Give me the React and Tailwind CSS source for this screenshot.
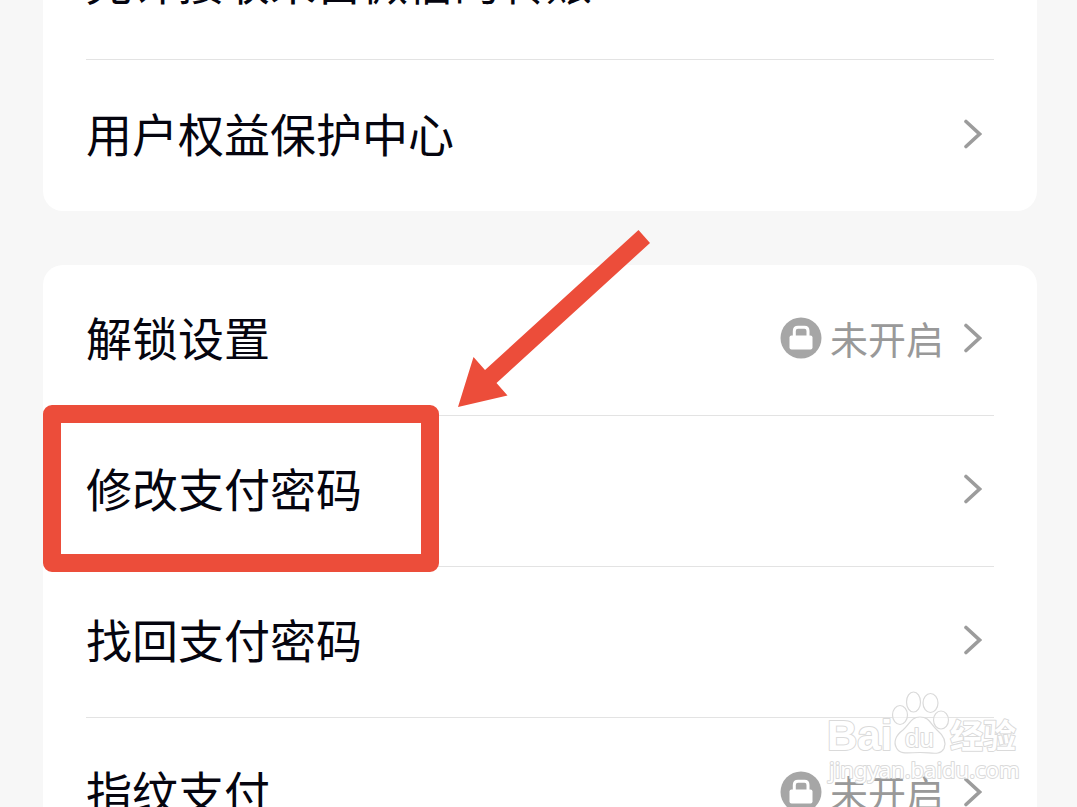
import React from "react";

const FONT =
  "font-['Noto_Sans_CJK_SC','Noto_Sans',sans-serif]";

function Chevron() {
  return (
    <svg viewBox="0 0 18 30" className="-mt-1 h-[30px] w-[18px] shrink-0" fill="none" aria-hidden="true">
      <path d="M2 2.500 L15.500 15 L2 27.500" stroke="#9c9c9c" strokeWidth="3.600" strokeLinecap="round" strokeLinejoin="miter" />
    </svg>
  );
}

function LockBadge() {
  return (
    <svg viewBox="0 0 42 42" className="h-[42px] w-[42px] shrink-0" aria-hidden="true">
      <circle cx="21" cy="21" r="20.500" fill="#a6a6a6" />
      <rect x="9.500" y="18.500" width="23" height="14" rx="2" fill="#fff" />
      <path d="M14.300 20 V14 Q14.300 10.200 18 10.200 H24.500 Q28 10.200 28 14 V20" fill="none" stroke="#fff" strokeWidth="3" />
    </svg>
  );
}

function Row({ label, status, children }) {
  return (
    <li className="relative px-[43px]">
      <a
        href="#"
        className="flex h-[151px] items-center justify-between border-b border-[#e3e3e3] pr-3"
      >
        <span className="pb-2 text-[46px] leading-[60px] text-[#05050f]">{label}</span>
        <span className="flex items-center gap-5">
          {status && (
            <span className="flex items-center gap-2 pb-1">
              <LockBadge />
              <span className="text-[38px] leading-[50px] text-[#999]">{status}</span>
            </span>
          )}
          <Chevron />
        </span>
      </a>
      {children}
    </li>
  );
}

function Card({ children }) {
  return (
    <ul className="rounded-[20px] bg-white [&>li:last-child>a]:border-b-0">{children}</ul>
  );
}

function Highlight() {
  return (
    <>
      <span className="pointer-events-none absolute -top-[11px] left-0 h-[167px] w-[396px] rounded-[9px] border-[18px] border-[#ec4d3a]" />
      <svg
        viewBox="0 0 192 177"
        className="pointer-events-none absolute -top-[186px] left-[415px] h-[177px] w-[192px]"
        aria-hidden="true"
      >
        <path d="M0 177 L15.500 127 L27 140 L180.500 0 L192 13 L38.500 153 L49.500 165.500 Z" fill="#ec4d3a" />
      </svg>
    </>
  );
}

function Watermark() {
  return (
    <svg
      viewBox="0 0 200 100"
      className="pointer-events-none absolute right-[54px] bottom-[20px] h-[100px] w-[200px]"
      fill="#fff"
      stroke="#dadada"
      strokeWidth="1.200"
      strokeLinejoin="round"
      role="img"
      aria-label="Baidu"
    >
      <g fillOpacity="0.5">
        <ellipse cx="77" cy="28" rx="7.500" ry="9.500" />
        <ellipse cx="90.500" cy="15" rx="7" ry="10" />
        <ellipse cx="107.500" cy="16" rx="7.500" ry="9.500" />
        <ellipse cx="118" cy="33" rx="7.500" ry="9" />
      </g>
      <path d="M97 30 C88 30 87 37 80 43 C73 48 70 55 73.500 61 C77 68 86 65.500 97 65.500 C109 65.500 117 69 121 61.500 C124 54 120 48 114 43 C107 36 106 30 97 30 Z" />
      <g className="[paint-order:stroke]" strokeWidth="2">
        <text x="4" y="63" fontSize="42" fontWeight="700" fontFamily="Liberation Sans">Bai</text>
        <text x="82" y="60" fontSize="26" fontFamily="Liberation Sans">du</text>
        <text x="127" y="61" fontSize="33" fontWeight="700" fontFamily="Noto Sans CJK SC">经验</text>
        <text x="6" y="91" fontSize="22" fontFamily="Noto Sans">jingyan.baidu.com</text>
      </g>
    </svg>
  );
}

export default function App() {
  return (
    <div className={`relative h-screen overflow-hidden bg-[#f7f7f7] ${FONT}`}>
      <main className="-mt-[91px] flex flex-col gap-[54px] pr-10 pl-[43px]">
        <Card>
          <Row label="允许接收来自微信的转账" />
          <Row label="用户权益保护中心" />
        </Card>
        <Card>
          <Row label="解锁设置" status="未开启" />
          <Row label="修改支付密码">
            <Highlight />
          </Row>
          <Row label="找回支付密码" />
          <Row label="指纹支付" status="未开启" />
        </Card>
      </main>
      <Watermark />
    </div>
  );
}
